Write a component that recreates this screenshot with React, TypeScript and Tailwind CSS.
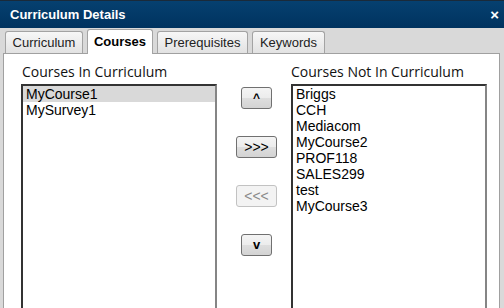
import React from "react";

const arial = { fontFamily: '"Liberation Sans", Arial, sans-serif' };
const label = { fontFamily: '"Open Sans", "Noto Sans", sans-serif' };

function Tab({ text, w, active }: { text: string; w: string; active?: boolean }) {
  if (active) {
    return (
      <div
        className={`${w} h-[25px] flex items-center justify-center rounded-t-[3px] border border-b-0 border-[#a3a3a3] bg-white text-[13px] font-bold text-black relative z-10`}
        style={arial}
      >
        {text}
      </div>
    );
  }
  return (
    <div
      className={`${w} h-[22px] mb-[1px] flex items-center justify-center rounded-t-[3px] border border-b-0 border-[#a3a3a3] bg-[linear-gradient(#f7f7f7,#e2e2e2)] text-[13px] text-[#222]`}
      style={arial}
    >
      {text}
    </div>
  );
}

function Btn({ text, w, disabled, bold, size }: { text: string; w: string; disabled?: boolean; bold?: boolean; size: string }) {
  return (
    <div
      className={`${w} h-[22px] flex items-center justify-center rounded-[3px] border ${size} ${
        disabled
          ? "border-[#c2c2c2] bg-[#f3f3f3] text-[#8a8a8a]"
          : "border-[#707070] bg-[linear-gradient(#f4f4f4,#ececec_50%,#dedede_50%,#d3d3d3)] text-black"
      } ${bold ? "font-bold" : ""}`}
      style={arial}
    >
      {text}
    </div>
  );
}

function ListBox({ items, selected }: { items: string[]; selected?: number }) {
  return (
    <div className="w-[196px] h-[240px] bg-white border-t-2 border-l-2 border-[#333] border-r-2 border-r-[#858585] border-b-2 border-b-[#858585]">
      {items.map((it, i) => (
        <div
          key={it}
          className={`h-[16px] leading-[16px] pl-[3px] text-[14px] text-black ${i === selected ? "bg-[#d9d9d9]" : ""}`}
          style={arial}
        >
          {it}
        </div>
      ))}
    </div>
  );
}

export default function App() {
  return (
    <div className="w-[504px] h-[308px] overflow-hidden bg-[#d9d9d9] flex flex-col">
      <div className="h-[28px] shrink-0 border-t border-[#1a2a3a] bg-[linear-gradient(#064070,#00335f)] flex items-center justify-between pl-[10px] pr-[5px]">
        <span className="text-white text-[13px] font-bold" style={arial}>
          Curriculum Details
        </span>
        <span className="text-white text-[15px] font-bold leading-none" style={arial}>
          ×
        </span>
      </div>
      <div className="h-[26px] shrink-0 flex items-end pl-[5px] gap-[4px] -mb-[1px]">
        <Tab text="Curriculum" w="w-[78px]" />
        <Tab text="Courses" w="w-[66px]" active />
        <Tab text="Prerequisites" w="w-[91px]" />
        <Tab text="Keywords" w="w-[73px]" />
      </div>
      <div className="ml-[3px] w-[497px] flex-1 bg-white border border-[#a0a0a0] flex pl-[17px]">
        <div className="flex flex-col pt-[9px]">
          <div className="h-[18px] leading-[18px] text-[14px] text-[#111] mb-[3px] pl-[1px]" style={label}>
            Courses In Curriculum
          </div>
          <ListBox items={["MyCourse1", "MySurvey1"]} selected={0} />
        </div>
        <div className="w-[74px] pl-[5px] pt-[33px] flex flex-col items-center gap-[27px]">
          <Btn text="^" w="w-[31px]" size="text-[12px]" bold />
          <Btn text=">>>" w="w-[41px]" size="text-[14px]" />
          <Btn text="<<<" w="w-[41px]" size="text-[14px]" disabled />
          <Btn text="v" w="w-[31px]" size="text-[13px]" bold />
        </div>
        <div className="flex flex-col pt-[9px]">
          <div className="h-[18px] leading-[18px] text-[14px] text-[#111] mb-[3px]" style={label}>
            Courses Not In Curriculum
          </div>
          <ListBox
            items={["Briggs", "CCH", "Mediacom", "MyCourse2", "PROF118", "SALES299", "test", "MyCourse3"]}
          />
        </div>
      </div>
    </div>
  );
}
